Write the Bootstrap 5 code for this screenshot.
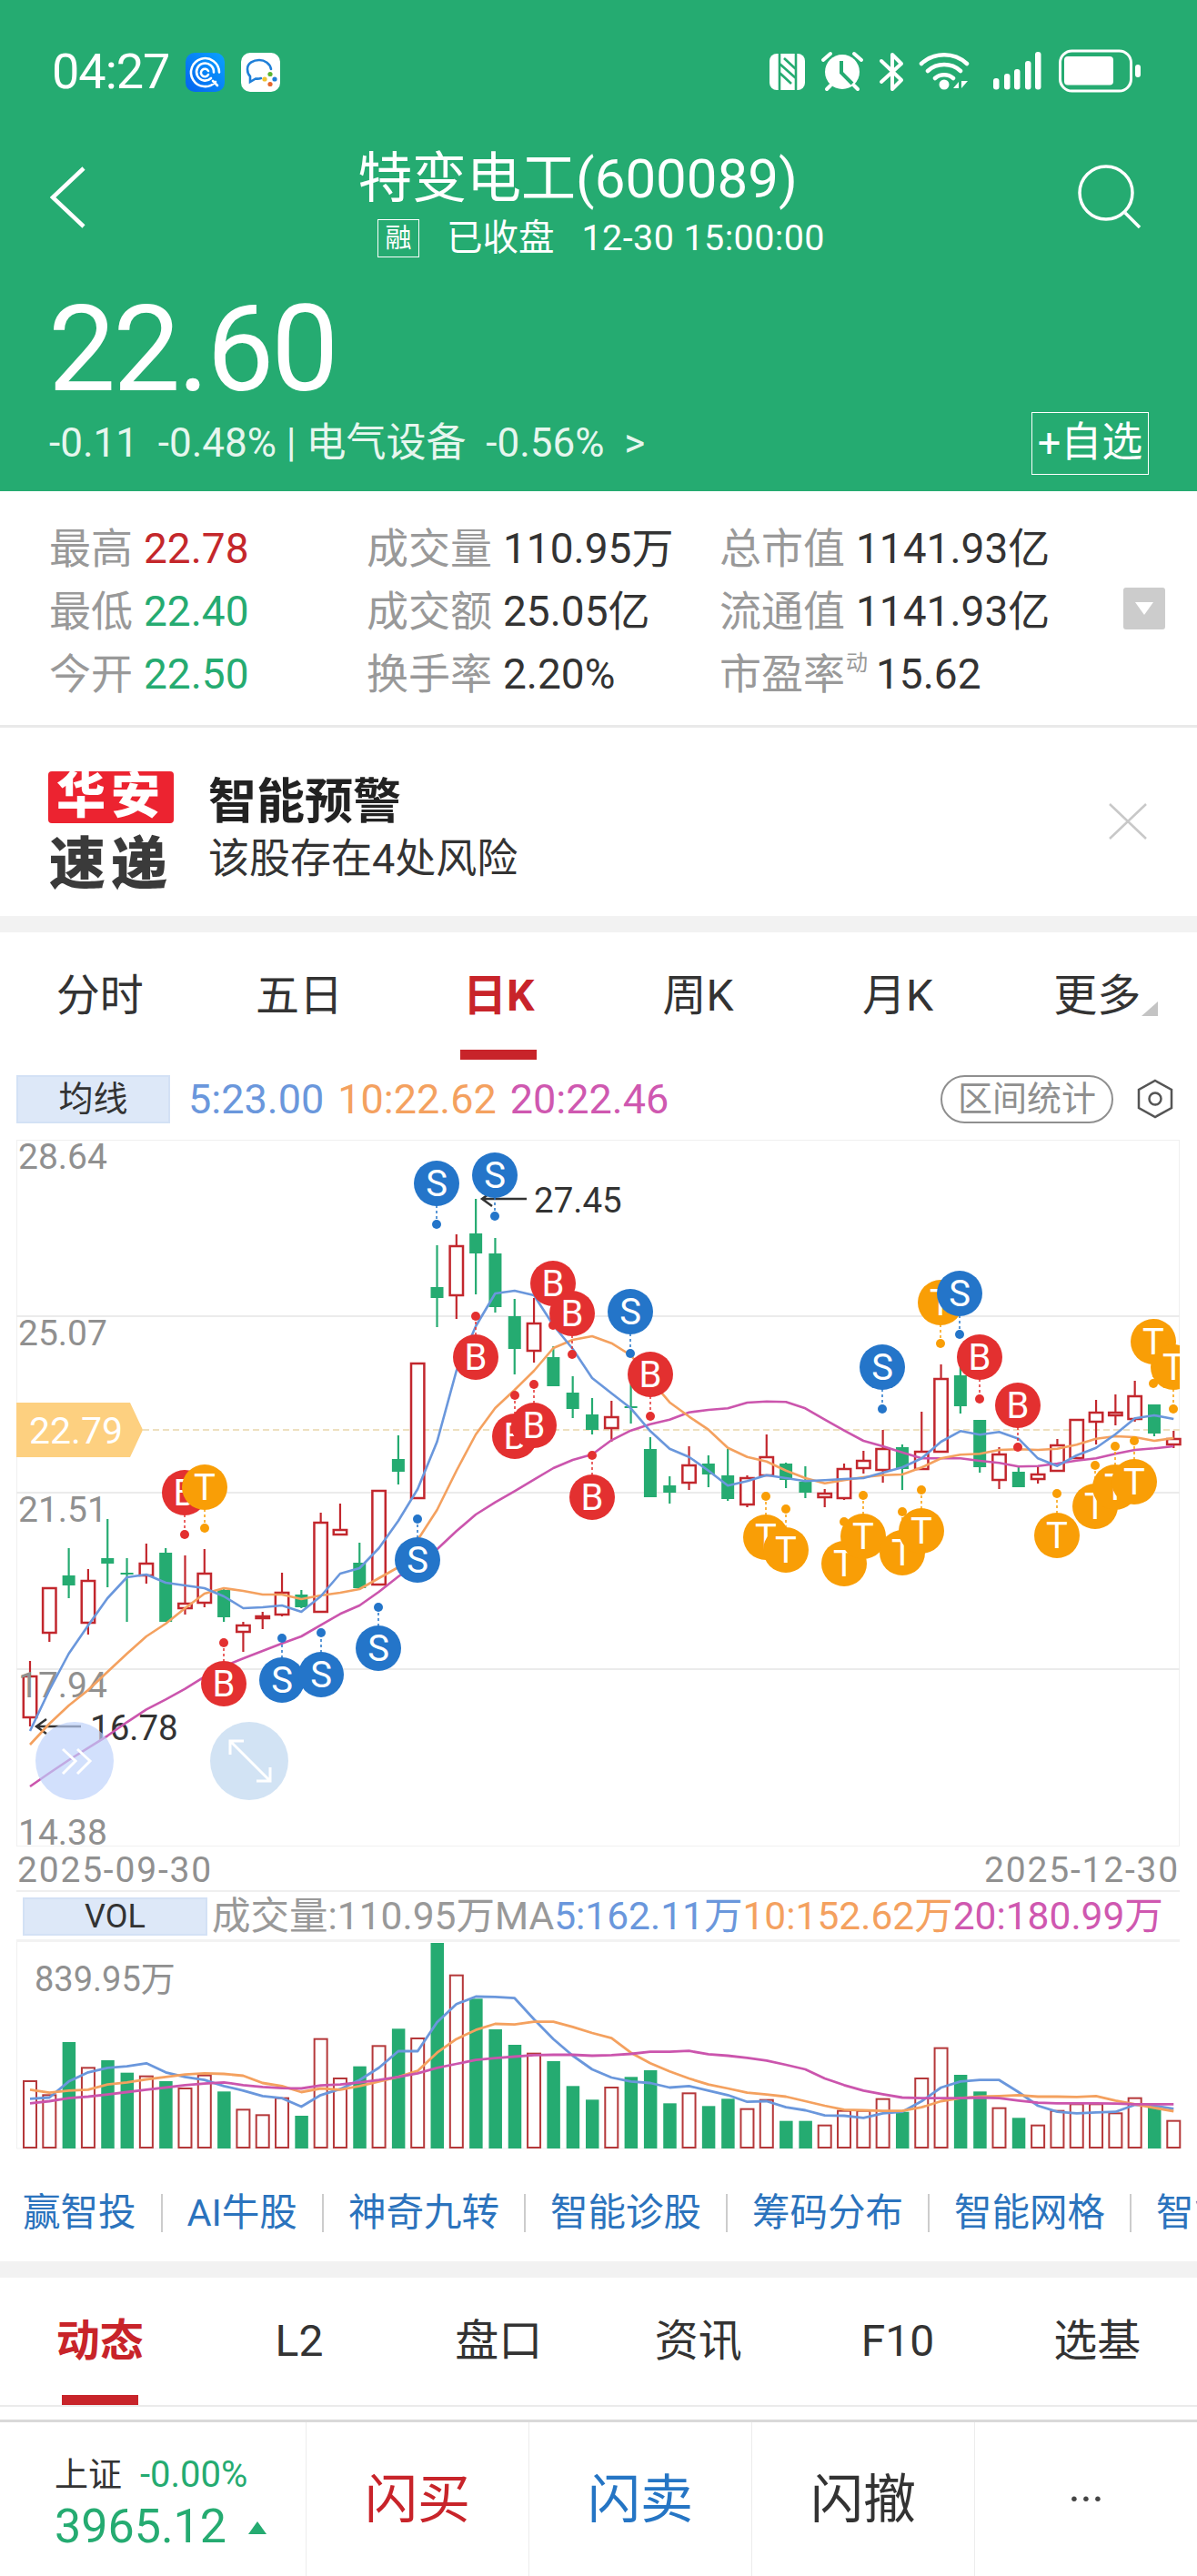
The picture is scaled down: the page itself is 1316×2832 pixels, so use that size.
<!DOCTYPE html>
<html lang="zh-CN">
<head>
    <meta charset="UTF-8">
    <meta name="viewport" content="width=device-width, initial-scale=1.0">
    <title>特变电工(600089)</title>
    <link href="https://cdn.jsdelivr.net/npm/bootstrap@5.3.0/dist/css/bootstrap.min.css" rel="stylesheet">
    <style>
        body {
            font-family: Roboto, "Noto Sans CJK SC", sans-serif;
            background-color: #ffffff;
            color: #333333;
            width: 1316px;
            height: 2832px;
            overflow: hidden;
        }
        .quote-head {
            height: 540px;
            background-color: #25ab71;
            color: #ffffff;
        }
        .status-row {
            height: 130px;
            padding: 28px 62px 0 57px;
        }
        .clock {
            font-size: 54px;
            line-height: 60px;
            letter-spacing: -1px;
            margin-right: 18px;
        }
        .app-icon { margin-right: 18px; }
        .title-row {
            padding: 34px 61px 0 55px;
            height: 154px;
        }
        .back-icon { margin-top: 19px; }
        .search-icon { margin-top: 17px; }
        .title-text {
            font-size: 60px;
            line-height: 66px;
            margin-right: 10px;
        }
        .sub-text {
            font-size: 39.5px;
            line-height: 44px;
            margin-top: 10px;
            margin-left: 42px;
        }
        .rong-tag {
            width: 46px;
            height: 42px;
            font-size: 29px;
            line-height: 40px;
            border: 1px solid #ffffff;
            margin-right: 30px;
        }
        .time-text { margin-left: 30px; letter-spacing: .4px; }
        .price-text {
            font-size: 132px;
            line-height: 130px;
            letter-spacing: -3px;
            margin: 35px 0 4px 53px;
        }
        .change-row { padding: 0 53px 0 54px; }
        .change-text {
            font-size: 44px;
            line-height: 69px;
            color: #e6f6ee;
        }
        .watch-btn {
            width: 129px;
            height: 69px;
            border: 1px solid #ffffff;
            font-size: 45px;
            line-height: 66px;
            text-align: center;
        }
        .stats {
            height: 260px;
            padding: 29px 0 0 54px;
            border-bottom: 3px solid #e9e9e9;
            font-size: 46px;
            line-height: 69px;
        }
        .stat-a { width: 349px; }
        .stat-b { width: 388px; }
        .stat-c { width: 444px; }
        .stat-key { color: #999999; margin-right: 12px; }
        .stat-up { color: #c4272b; }
        .stat-down { color: #25ab71; }
        .stat-sup {
            font-size: 24px;
            line-height: 1;
            vertical-align: 20px;
            margin-left: -11px;
            margin-right: 9px;
            color: #999999;
        }
        .more-box {
            width: 46px;
            height: 46px;
            margin-top: 77px;
            background-color: #cccccc;
            border-radius: 3px;
        }
        .alert-strip {
            height: 207px;
            padding-left: 53px;
        }
        .logo-red {
            width: 138px;
            height: 57px;
            margin-top: 48px;
            background-color: #ec2330;
            border-radius: 4px;
            color: #ffffff;
            font-size: 54px;
            line-height: 56px;
            font-weight: 900;
            letter-spacing: 6px;
            text-align: center;
        }
        .logo-dark {
            width: 138px;
            margin-top: 12px;
            font-size: 62px;
            line-height: 68px;
            font-weight: 900;
            letter-spacing: 6px;
            text-align: center;
            color: #3a3a3a;
        }
        .alert-text { margin-left: 38px; padding-top: 53px; }
        .alert-title {
            font-size: 53px;
            line-height: 58px;
            font-weight: 700;
            color: #222222;
        }
        .alert-body {
            font-size: 45px;
            line-height: 52px;
            margin-top: 8px;
            color: #333333;
        }
        .alert-close { margin: 83px 55px 0 auto; }
        .band {
            height: 18px;
            background-color: #f2f2f2;
        }
        .tab-bar .nav-link {
            position: relative;
            padding: 0;
            height: 140px;
            line-height: 140px;
            font-size: 48px;
            color: #333333;
        }
        .tab-bar .nav-link.active {
            color: #c8242a;
            font-weight: 700;
        }
        .tab-bar .nav-link.active::after {
            content: "";
            position: absolute;
            left: 50%;
            bottom: 0;
            width: 84px;
            height: 11px;
            margin-left: -42px;
            background-color: #c8242a;
        }
        .more-corner {
            position: absolute;
            left: 158px;
            top: 76px;
            width: 0;
            height: 0;
            border-left: 18px solid transparent;
            border-bottom: 16px solid #c4c4c4;
        }
        .ma-row {
            height: 88px;
            padding: 17px 26px 0 18px;
        }
        .ma-tag {
            width: 169px;
            height: 53px;
            background-color: #dde8f8;
            border: 2px solid #d3e1f5;
            font-size: 38px;
            line-height: 48px;
            text-align: center;
            color: #333333;
        }
        .ma-vals {
            font-size: 45px;
            line-height: 54px;
            margin-left: 20px;
        }
        .ma-vals span { margin-right: 15px; }
        .ma5 { color: #6a97dc; }
        .ma10 { color: #f4a15f; }
        .ma20 { color: #cf58b0; }
        .range-pill {
            width: 190px;
            height: 53px;
            border: 2px solid #8f8f8f;
            border-radius: 27px;
            font-size: 38px;
            line-height: 48px;
            text-align: center;
            color: #8f8f8f;
        }
        .hex-icon { margin: 4px 0 0 26px; }
        .chart-svg {
            display: block;
            margin-left: 18px;
            overflow: visible;
        }
        .date-row {
            height: 48px;
            padding: 0 19px;
            font-size: 39px;
            line-height: 52px;
            letter-spacing: 1.8px;
            color: #909090;
        }
        .vol-row {
            height: 57px;
            margin: 0 19px 0 18px;
            padding: 6px 0 0 7px;
            border-top: 2px solid #efefef;
            border-bottom: 3px solid #f2f2f2;
            white-space: nowrap;
        }
        .vol-tag {
            width: 203px;
            height: 42px;
            background-color: #dde8f8;
            border: 2px solid #d3e1f5;
            font-size: 36px;
            line-height: 38px;
            text-align: center;
            color: #333333;
        }
        .vol-vals {
            font-size: 42.5px;
            line-height: 42px;
            margin-left: 5px;
            color: #999999;
        }
        .tool-row {
            height: 123px;
            padding: 49px 0 0 25px;
            overflow: hidden;
            white-space: nowrap;
            font-size: 41.5px;
            line-height: 42px;
            color: #2b73bd;
        }
        .tool-item {
            flex: none;
            height: 42px;
            padding-right: 27px;
            margin-right: 27px;
            border-right: 2px solid #cccccc;
        }
        .sub-tabs { border-bottom: 2px solid #ebebeb; }
        .foot-bar {
            height: 172px;
            margin-top: 14px;
            border-top: 3px solid #d9d9d9;
        }
        .foot-cell {
            width: 245px;
            border-right: 1px solid #ececec;
            font-size: 58px;
            line-height: 170px;
            text-align: center;
        }
        .foot-index {
            width: 337px;
            padding: 36px 0 0 60px;
            border-right: 1px solid #ececec;
        }
        .index-top {
            font-size: 37px;
            line-height: 44px;
        }
        .index-pct { font-size: 40px; color: #25ab71; margin-left: 20px; }
        .index-val {
            font-size: 52px;
            line-height: 60px;
            margin-top: 4px;
            color: #25ab71;
        }
        .index-arrow {
            display: inline-block;
            margin-left: 24px;
            vertical-align: 9px;
            width: 0;
            height: 0;
            border-left: 10px solid transparent;
            border-right: 10px solid transparent;
            border-bottom: 14px solid #25ab71;
        }
        .foot-red { color: #c8242a; }
        .foot-blue { color: #2575c4; }
        .foot-more {
            flex: 1;
            font-size: 50px;
            line-height: 170px;
            text-align: center;
            color: #444444;
        }
    </style>
</head>
<body>
    <header class="quote-head">
        <div class="status-row d-flex align-items-center">
            <span class="clock">04:27</span>
            <svg class="app-icon" width="43" height="43" viewBox="0 0 43 43">
                <defs><linearGradient id="appBlue" x1="0" y1="1" x2="1" y2="0"><stop offset="0" stop-color="#0562ee"/><stop offset="1" stop-color="#0aa2ff"/></linearGradient></defs>
                <rect width="43" height="43" rx="10" fill="url(#appBlue)"/>
                <path d="M33 32A15.5 15.5 0 1 1 37 21.5M28 28A9.5 9.5 0 1 1 31 21.5M25 20a4.3 4.3 0 1 0 0 4M30 31l5 5" fill="none" stroke="#fff" stroke-width="2.6" stroke-linecap="round"/>
            </svg>
            <svg width="43" height="43" viewBox="0 0 43 43">
                <rect width="43" height="43" rx="10" fill="#fff"/>
                <path d="M22 28c-2 .6-4 .8-6 .5l-6 3.5v-6C8 24 7 21 7 18 7 11 14 8 20 8s12 4 13 10" fill="none" stroke="#1f7fd8" stroke-width="2.6" stroke-linecap="round"/>
                <circle cx="26" cy="29" r="2.6" fill="#f2c230"/>
                <circle cx="32" cy="23.5" r="2.6" fill="#5cb531"/>
                <circle cx="37" cy="29" r="2.6" fill="#1f7fd8"/>
                <circle cx="32" cy="34.5" r="2.6" fill="#e4662b"/>
            </svg>
            <svg class="ms-auto" width="408" height="50" viewBox="845 54 408 50">
                <rect x="845" y="59" width="39" height="40" rx="8" fill="#fff"/>
                <path d="M856 59v40M874 59v40M856 70l18 16M856 80l13 12M861 64l13 12" fill="none" stroke="#25ab71" stroke-width="2.6"/>
                <circle cx="925" cy="79" r="19" fill="#fff"/>
                <path d="M924 67v13l12 12" fill="none" stroke="#25ab71" stroke-width="4"/>
                <path d="M904 66l8-7M946 66l-8-7M908 98l4-4M942 98l-4-4" fill="none" stroke="#fff" stroke-width="4" stroke-linecap="round"/>
                <path d="M968 67l22 21-10 10V60l10 10-22 20" fill="none" stroke="#fff" stroke-width="4" stroke-linejoin="round" stroke-linecap="round"/>
                <path d="M1012 70a37 37 0 0 1 50 0M1019 78a27 27 0 0 1 36 0M1027 86a15 15 0 0 1 20 0" fill="none" stroke="#fff" stroke-width="4.5" stroke-linecap="round"/>
                <circle cx="1037" cy="93" r="5.5" fill="#fff"/>
                <path d="M1047 97l6-7v7zM1056 89v8l7-8z" fill="#fff"/>
                <g fill="#fff">
                    <rect x="1091" y="86" width="6.5" height="12.5" rx="3"/>
                    <rect x="1103" y="81" width="6.5" height="17.5" rx="3"/>
                    <rect x="1114" y="76" width="6.5" height="22.5" rx="3"/>
                    <rect x="1126" y="67" width="6.5" height="31.5" rx="3"/>
                    <rect x="1137" y="57" width="6.5" height="41.5" rx="3"/>
                </g>
                <rect x="1164.5" y="56" width="78" height="44" rx="13" fill="none" stroke="#fff" stroke-width="3"/>
                <rect x="1169" y="62" width="54" height="31.5" rx="4" fill="#fff"/>
                <rect x="1247" y="71" width="6" height="14" rx="3" fill="#fff"/>
            </svg>
        </div>
        <div class="title-row d-flex">
            <svg class="back-icon" width="40" height="68" viewBox="0 0 40 68"><path d="M37 2L3 34l34 32" fill="none" stroke="#fff" stroke-width="4.5"/></svg>
            <div class="flex-grow-1 text-center">
                <div class="title-text">特变电工(600089)</div>
                <div class="sub-text d-flex justify-content-center align-items-center">
                    <span class="rong-tag">融</span><span>已收盘</span><span class="time-text">12-30 15:00:00</span>
                </div>
            </div>
            <svg class="search-icon" width="70" height="70" viewBox="0 0 70 70"><circle cx="31" cy="31" r="29" fill="none" stroke="#fff" stroke-width="3.5"/><path d="M52 53l16 16" stroke="#fff" stroke-width="3.5"/></svg>
        </div>
        <div class="price-text">22.60</div>
        <div class="change-row d-flex justify-content-between">
            <span class="change-text">-0.11 &nbsp;-0.48% | 电气设备 &nbsp;-0.56% &nbsp;&gt;</span>
            <span class="watch-btn">+自选</span>
        </div>
    </header>

    <section class="stats d-flex">
        <div class="stat-a">
            <div><span class="stat-key">最高</span><span class="stat-up">22.78</span></div>
            <div><span class="stat-key">最低</span><span class="stat-down">22.40</span></div>
            <div><span class="stat-key">今开</span><span class="stat-down">22.50</span></div>
        </div>
        <div class="stat-b">
            <div><span class="stat-key">成交量</span>110.95万</div>
            <div><span class="stat-key">成交额</span>25.05亿</div>
            <div><span class="stat-key">换手率</span>2.20%</div>
        </div>
        <div class="stat-c">
            <div><span class="stat-key">总市值</span>1141.93亿</div>
            <div><span class="stat-key">流通值</span>1141.93亿</div>
            <div><span class="stat-key">市盈率</span><span class="stat-sup">动</span>15.62</div>
        </div>
        <div class="more-box d-flex align-items-center justify-content-center">
            <svg width="20" height="14" viewBox="0 0 20 14"><path d="M0 0h20L10 14z" fill="#fff"/></svg>
        </div>
    </section>

    <section class="alert-strip d-flex">
        <div>
            <div class="logo-red">华安</div>
            <div class="logo-dark">速递</div>
        </div>
        <div class="alert-text">
            <div class="alert-title">智能预警</div>
            <div class="alert-body">该股存在4处风险</div>
        </div>
        <svg class="alert-close" width="42" height="40" viewBox="0 0 42 40"><path d="M1 1l40 38M41 1L1 39" fill="none" stroke="#c8c8c8" stroke-width="2.5"/></svg>
    </section>
    <div class="band"></div>

    <nav class="tab-bar nav nav-justified">
        <a class="nav-link" href="#">分时</a>
        <a class="nav-link" href="#">五日</a>
        <a class="nav-link active" href="#">日K</a>
        <a class="nav-link" href="#">周K</a>
        <a class="nav-link" href="#">月K</a>
        <a class="nav-link" href="#">更多<span class="more-corner"></span></a>
    </nav>

    <div class="ma-row d-flex">
        <span class="ma-tag">均线</span>
        <div class="ma-vals"><span class="ma5">5:23.00</span><span class="ma10">10:22.62</span><span class="ma20">20:22.46</span></div>
        <span class="range-pill ms-auto">区间统计</span>
        <svg class="hex-icon" width="40" height="44" viewBox="0 0 40 44"><path d="M20 2l18 10v20L20 42 2 32V12z" fill="none" stroke="#555" stroke-width="2.5"/><circle cx="20" cy="22" r="6.5" fill="none" stroke="#555" stroke-width="2.5"/></svg>
    </div>

    <svg id="kline" class="chart-svg" width="1279" height="777" viewBox="18 1253 1279 777"></svg>

    <div class="date-row d-flex justify-content-between"><span>2025-09-30</span><span>2025-12-30</span></div>

    <div class="vol-row d-flex">
        <span class="vol-tag">VOL</span>
        <div class="vol-vals">成交量:110.95万MA<span class="ma5">5:162.11万</span><span class="ma10">10:152.62万</span><span class="ma20">20:180.99万</span></div>
    </div>

    <svg id="volume" class="chart-svg" width="1279" height="228" viewBox="18 2135 1279 228"></svg>

    <div class="tool-row d-flex">
        <span class="tool-item">赢智投</span>
        <span class="tool-item">AI牛股</span>
        <span class="tool-item">神奇九转</span>
        <span class="tool-item">智能诊股</span>
        <span class="tool-item">筹码分布</span>
        <span class="tool-item">智能网格</span>
        <span class="tool-item">智能选股</span>
    </div>
    <div class="band"></div>

    <nav class="tab-bar sub-tabs nav nav-justified">
        <a class="nav-link active" href="#">动态</a>
        <a class="nav-link" href="#">L2</a>
        <a class="nav-link" href="#">盘口</a>
        <a class="nav-link" href="#">资讯</a>
        <a class="nav-link" href="#">F10</a>
        <a class="nav-link" href="#">选基</a>
    </nav>

    <footer class="foot-bar d-flex">
        <div class="foot-index">
            <div class="index-top">上证<span class="index-pct">-0.00%</span></div>
            <div class="index-val">3965.12<span class="index-arrow"></span></div>
        </div>
        <div class="foot-cell foot-red">闪买</div>
        <div class="foot-cell foot-blue">闪卖</div>
        <div class="foot-cell">闪撤</div>
        <div class="foot-more">···</div>
    </footer>

    <script>
        const GREEN = '#25ab71', RED = '#c2272d';
        const BLUE_LINE = '#6a97dc', ORANGE_LINE = '#f4a15f', PINK_LINE = '#cb55ad';
        const xAt = (i) => 33 + 21.31 * i;

        // i = candle index: [red?, wick top, wick bottom, body top, body bottom]
        const candles = [
            [1,1826,1898,1843,1888],[1,1746,1805,1746,1795],[0,1702,1757,1732,1743],[1,1725,1797,1738,1784],
            [0,1670,1745,1713,1719],[0,1713,1783,1729,1731],[1,1697,1741,1719,1732],[0,1702,1783,1707,1783],
            [1,1710,1775,1763,1768],[1,1703,1767,1730,1762],[0,1747,1783,1748,1778],[1,1783,1816,1787,1794],
            [1,1772,1791,1777,1779],[1,1729,1777,1751,1775],[0,1748,1768,1753,1767],[1,1663,1772,1674,1772],
            [1,1653,1687,1682,1687],[0,1696,1746,1718,1746],[1,1639,1742,1639,1742],[0,1578,1632,1604,1618],
            [1,1499,1647,1499,1647],[0,1369,1459,1415,1427],[1,1357,1450,1370,1424],[0,1318,1423,1356,1378],
            [0,1361,1443,1378,1437],[0,1428,1511,1447,1483],[1,1427,1498,1455,1485],[0,1480,1524,1492,1524],
            [0,1513,1559,1531,1549],[0,1537,1577,1555,1572],[1,1540,1585,1558,1570],[0,1522,1565,1546,1548],
            [0,1580,1646,1593,1646],[0,1623,1653,1633,1641],[1,1590,1638,1611,1630],[0,1600,1635,1609,1621],
            [0,1593,1650,1622,1648],[1,1622,1657,1625,1654],[1,1577,1623,1602,1622],[0,1608,1636,1609,1627],
            [0,1612,1647,1629,1641],[1,1637,1657,1642,1646],[1,1609,1649,1615,1647],[1,1595,1620,1606,1614],
            [1,1572,1630,1593,1616],[0,1588,1638,1591,1615],[1,1552,1615,1596,1615],[1,1500,1596,1516,1596],
            [0,1503,1554,1512,1546],[0,1561,1619,1561,1613],[1,1591,1637,1599,1627],[0,1613,1635,1618,1635],
            [1,1612,1631,1621,1626],[1,1582,1618,1589,1617],[1,1561,1603,1561,1603],[1,1539,1588,1553,1563],
            [1,1533,1567,1553,1556],[1,1518,1563,1535,1560],[0,1544,1579,1544,1576],[1,1573,1592,1582,1588]
        ];

        const ma5 = [1903,1858,1818,1787,1757,1734,1731,1740,1743,1746,1755,1768,1767,1765,1772,1755,1730,1724,1702,1672,1637,1585,1507,1458,1422,1419,1424,1457,1483,1515]
            .concat([935,985,1060,1118,1145,1190,1240,1225,1205,1215,1225,1222,1218,1215,1197,1180,1150,1095,1060,1072,1063,1085,1150,1175,1140,1115,1070,1018,1008,1020].map(p => 1220 + p / 3));
        const ma10 = [1918,1895,1875,1858,1838,1818,1799,1785,1768,1752,1746,1749,1753,1753,1758,1754,1751,1747,1735,1723,1693,1660,1617,1577,1548,1528,1507,1482,1473,1469]
            .concat([770,810,890,965,1012,1055,1115,1145,1160,1190,1215,1232,1222,1212,1205,1203,1180,1150,1138,1135,1122,1120,1122,1118,1105,1085,1077,1080,1092,1083].map(p => 1220 + p / 3));
        const ma20 = [1092,1048,1005,965,925,880,838,805,770,730,695,670,645,620,597,560,523,495,450,400,355,310,250,195,155,118,80,42,15,-3].map(p => 1600 + p / 3)
            .concat([1090,1058,1037,1022,998,990,985,966,962,964,985,1022,1058,1092,1110,1130,1150,1150,1150,1158,1165,1177,1175,1167,1157,1150,1135,1122,1117,1110].map(p => 1220 + p / 3));

        // x, circle y, dot y, letter
        const signals = [
            [203,1641,1687,'B'],[225,1635,1680,'T'],[246,1851,1806,'B'],[310,1847,1801,'S'],[353,1841,1795,'S'],
            [416,1812,1767,'S'],[459,1715,1670,'S'],[480,1301,1346,'S'],[523,1492,1447,'B'],[544,1292,1337,'S'],
            [566,1579,1534,'B'],[587,1567,1522,'B'],[608,1411,1457,'B'],[629,1444,1489,'B'],[651,1646,1600,'B'],
            [693,1442,1488,'S'],[715,1511,1557,'B'],[842,1690,1645,'T'],[864,1704,1659,'T'],[928,1719,1673,'T'],
            [949,1689,1644,'T'],[970,1503,1549,'S'],[992,1707,1662,'T'],[1013,1683,1638,'T'],[1034,1432,1477,'T'],
            [1055,1422,1467,'S'],[1077,1492,1538,'B'],[1119,1545,1591,'B'],[1162,1688,1642,'T'],[1204,1656,1611,'T'],
            [1226,1635,1590,'T'],[1247,1629,1584,'T'],[1268,1475,1521,'T'],[1290,1503,1549,'T']
        ];
        const signalColor = { S: '#2475c9', B: '#e33030', T: '#f99e06' };

        const polyline = (values, color, width, xFn) => {
            const pts = values.map((y, i) => xFn(i).toFixed(1) + ',' + y.toFixed(1)).join(' ');
            return `<polyline points="${pts}" fill="none" stroke="${color}" stroke-width="${width}" stroke-linejoin="round"/>`;
        };
        const label = (x, y, text, size, color, extra) =>
            `<text x="${x}" y="${y}" font-size="${size}" fill="${color}" ${extra || ''}>${text}</text>`;

        let k = '<clipPath id="plotClip"><rect x="18" y="1253" width="1279" height="777"/></clipPath>';
        k += '<rect x="18.5" y="1253.5" width="1278" height="776" fill="none" stroke="#f0f0f0" stroke-width="1"/>';
        [1447, 1641, 1835].forEach(y => { k += `<path d="M18 ${y}H1297" stroke="#ebebeb" stroke-width="2"/>`; });
        k += '<path d="M157 1572H1297" stroke="#eee0c0" stroke-width="2" stroke-dasharray="7 4"/>';
        k += '<path d="M18 1542H143L157 1572L143 1602H18z" fill="#fdd080"/>';
        k += label(32, 1587, '22.79', 41, '#ffffff');

        candles.forEach((c, i) => {
            const x = xAt(i), color = c[0] ? RED : GREEN;
            k += `<path d="M${x} ${c[1]}V${c[2]}" stroke="${color}" stroke-width="2.2"/>`;
            if (c[0]) {
                k += `<rect x="${x - 7.2}" y="${c[3]}" width="14.4" height="${c[4] - c[3]}" fill="#fff" stroke="${color}" stroke-width="2.5"/>`;
            } else {
                k += `<rect x="${x - 7}" y="${c[3]}" width="14" height="${c[4] - c[3]}" fill="${color}"/>`;
            }
        });

        // axis labels sit on top of the candles, 17.94 shows through the first one
        [['28.64',1285],['25.07',1479],['21.51',1673],['17.94',1866],['14.38',2028]].forEach(([t, y]) => {
            k += label(20, y, t, 39, '#909090');
        });

        k += '<path d="M530 1318h49M541 1310l-11 8 11 8" fill="none" stroke="#333" stroke-width="2.5"/>';
        k += label(587, 1333, '27.45', 38.5, '#333333');
        k += '<path d="M40 1898h49M51 1890l-11 8 11 8" fill="none" stroke="#333" stroke-width="2.5"/>';
        k += label(99, 1913, '16.78', 38.5, '#333333');

        k += polyline(ma20, PINK_LINE, 2.6, xAt);
        k += polyline(ma10, ORANGE_LINE, 2.6, xAt);
        k += polyline(ma5, BLUE_LINE, 2.6, xAt);

        k += '<g clip-path="url(#plotClip)">';
        signals.forEach(([x, cy, dot, ch]) => {
            const color = signalColor[ch];
            k += `<path d="M${x} ${cy}V${dot}" stroke="${color}" stroke-width="1.5" stroke-dasharray="3 3"/>`;
            k += `<circle cx="${x}" cy="${dot}" r="5" fill="${color}"/>`;
            k += `<circle cx="${x}" cy="${cy}" r="25" fill="${color}"/>`;
            k += `<text x="${x}" y="${cy + 14}" font-size="40" fill="#fff" text-anchor="middle">${ch}</text>`;
        });
        k += '</g>';

        k += '<circle cx="82" cy="1936" r="43" fill="#bcd1fb" fill-opacity=".68"/>';
        k += '<path d="M69 1923l14 13-14 14M85 1923l14 13-14 14" fill="none" stroke="#fff" stroke-width="3"/>';
        k += '<circle cx="274" cy="1936" r="43" fill="#c3d9f0" fill-opacity=".75"/>';
        k += '<path d="M253 1914l44 44M253 1929v-15h15M297 1943v15h-15" fill="none" stroke="#fff" stroke-width="3"/>';
        document.getElementById('kline').innerHTML = k;

        // volume tops as read off the chart, y = 2060 + p / 3
        const volRed = [1,1,0,1,0,0,1,0,1,1,0,1,1,1,0,1,1,0,1,0,1,0,1,0,0,0,1,0,0,0,1,0,0,0,1,0,0,1,1,0,0,1,1,1,1,0,1,1,0,0,1,0,1,1,1,1,1,1,0,1];
        const volTop = [684,730,555,640,615,656,668,684,708,665,718,778,796,740,798,545,675,635,568,511,543,228,335,412,513,564,593,618,700,745,705,670,648,757,724,766,742,776,746,815,815,830,782,782,743,785,675,575,663,718,773,805,830,782,760,760,790,740,765,815];
        const volMa5 = [742,738,685,655,640,635,625,655,670,680,700,715,733,740,768,730,710,680,640,585,585,490,430,405,406,410,480,545,600,645,672,685,690,705,700,715,730,752,750,770,780,797,798,805,790,785,750,705,685,680,680,720,765,785,790,787,785,762,765,775];
        const volMa10 = [712,722,715,712,695,688,678,670,662,658,660,666,690,700,720,708,712,700,685,670,650,590,545,515,495,497,488,488,505,525,542,590,625,652,675,695,708,722,728,735,750,765,778,780,782,782,770,750,740,735,733,730,735,735,736,733,748,760,772,783];
        const volMa20 = [757,750,740,735,728,720,712,705,697,692,688,697,703,707,708,698,695,688,680,670,658,640,627,614,608,603,598,597,597,600,598,594,587,587,584,595,600,607,616,630,645,675,697,715,727,738,740,740,740,738,740,748,755,757,757,757,758,760,760,760];
        const toY = (p) => 2060 + p / 3;

        let v = '<path d="M18.5 2135V2362H1297" fill="none" stroke="#f0f0f0" stroke-width="1"/>';
        volTop.forEach((p, i) => {
            const x = xAt(i), y = toY(p);
            if (volRed[i]) {
                v += `<rect x="${x - 7}" y="${y}" width="14" height="${2361 - y}" fill="#fff" stroke="#b5383a" stroke-width="2"/>`;
            } else {
                v += `<rect x="${x - 7}" y="${y}" width="14.5" height="${2362 - y}" fill="${GREEN}"/>`;
            }
        });
        v += label(38, 2189, '839.95万', 38, '#909090', 'font-family="Roboto, \'Noto Sans CJK SC\', sans-serif"');
        v += polyline(volMa5.map(toY), BLUE_LINE, 2.8, xAt);
        v += polyline(volMa10.map(toY), ORANGE_LINE, 2.8, xAt);
        v += polyline(volMa20.map(toY), PINK_LINE, 2.8, xAt);
        document.getElementById('volume').innerHTML = v;
    </script>
    <script src="https://cdn.jsdelivr.net/npm/bootstrap@5.3.0/dist/js/bootstrap.bundle.min.js"></script>
</body>
</html>
